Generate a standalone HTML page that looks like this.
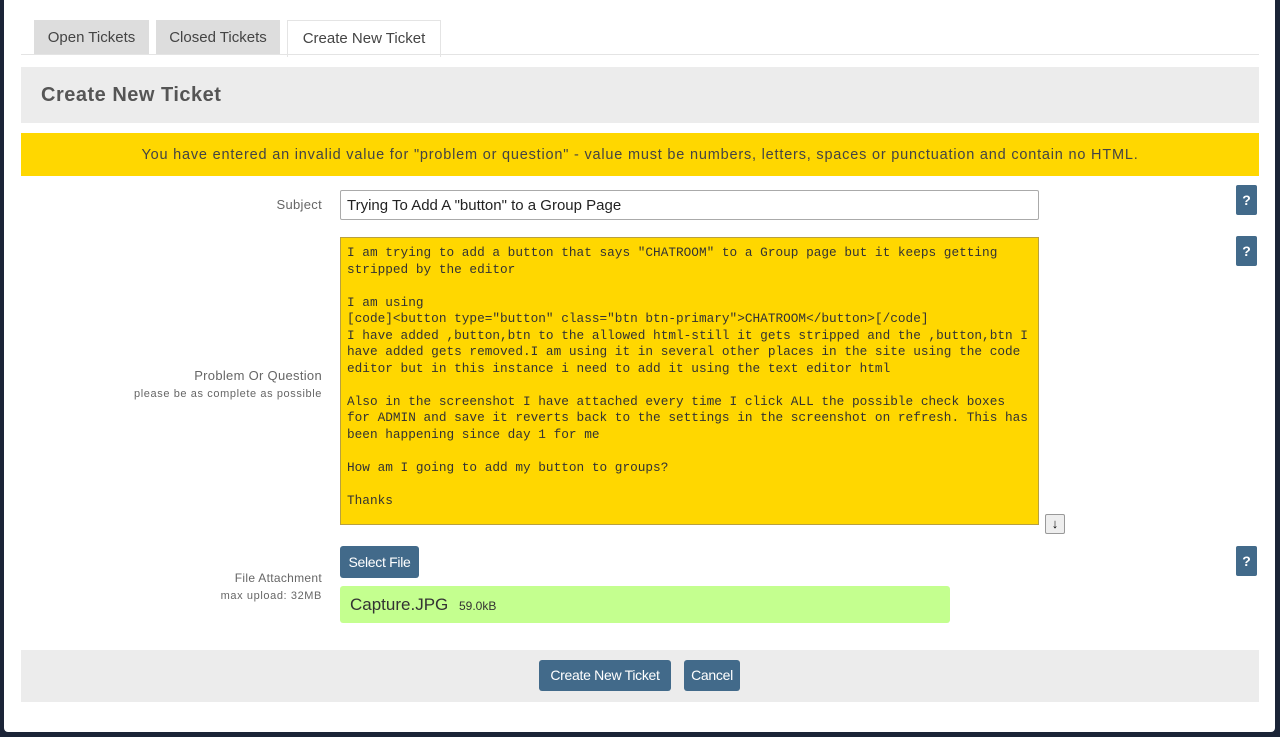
<!DOCTYPE html>
<html><head><style>
body{margin:0;width:1280px;height:737px;background:#1b2437;font-family:"Liberation Sans",sans-serif;position:relative;overflow:hidden}
.page{position:absolute;left:4px;top:0;width:1271px;height:732px;background:#fff;border-radius:0 0 4px 4px}
.a{position:absolute}
.tab{position:absolute;top:20px;height:35px;background:#ddd;color:#444;font-size:15px;line-height:35px;text-align:center}
.btn{position:absolute;background:#426a8a;color:#fff;font-size:14px;text-align:center;border-radius:3px;letter-spacing:-0.3px}
.q{position:absolute;left:1236px;width:21px;height:30px;background:#426a8a;color:#fff;font-weight:bold;font-size:14px;line-height:30px;text-align:center;border-radius:2px}
.lbl{position:absolute;right:958px;text-align:right;color:#666;font-size:13px;letter-spacing:0.3px}
.sm{font-size:11px;color:#666;letter-spacing:0.6px}
</style></head><body>
<div class="page"></div>
<div class="tab" style="left:34px;width:115px">Open Tickets</div>
<div class="tab" style="left:156px;width:124px">Closed Tickets</div>
<div class="tab" style="left:287px;width:152px;height:36px;background:#fff;border:1px solid #e4e4e4;border-bottom:none">Create New Ticket</div>
<div class="a" style="left:21px;top:54px;width:1238px;height:1px;background:#e4e4e4"></div>
<div class="a" style="left:21px;top:67px;width:1238px;height:56px;background:#ececec"></div>
<div class="a" style="left:41px;top:84px;font-size:20px;font-weight:bold;color:#555;letter-spacing:0.5px">Create New Ticket</div>
<div class="a" style="left:21px;top:133px;width:1238px;height:43px;background:#ffd700;color:#444;font-size:14.5px;line-height:45px;text-align:center;letter-spacing:0.8px">You have entered an invalid value for "problem or question" - value must be numbers, letters, spaces or punctuation and contain no HTML.</div>
<div class="lbl" style="top:197px">Subject</div>
<div class="a" style="left:340px;top:190px;border:1px solid #aaa;border-radius:2px;font-size:15px;line-height:30px;padding-left:6px;box-sizing:border-box;width:699px;height:30px;color:#222">Trying To Add A "button" to a Group Page</div>
<div class="q" style="top:185px">?</div>
<div class="q" style="top:236px">?</div>
<div class="q" style="top:546px">?</div>
<div class="a" style="left:340px;top:237px;width:699px;height:288px;background:#ffd700;border:1px solid #b8a040;box-sizing:border-box"></div>
<pre class="a" style="margin:0;left:347px;top:245px;font-family:'Liberation Mono',monospace;font-size:12.75px;line-height:16.5px;color:#333">I am trying to add a button that says "CHATROOM" to a Group page but it keeps getting
stripped by the editor

I am using
[code]&lt;button type="button" class="btn btn-primary"&gt;CHATROOM&lt;/button&gt;[/code]
I have added ,button,btn to the allowed html-still it gets stripped and the ,button,btn I
have added gets removed.I am using it in several other places in the site using the code
editor but in this instance i need to add it using the text editor html

Also in the screenshot I have attached every time I click ALL the possible check boxes
for ADMIN and save it reverts back to the settings in the screenshot on refresh. This has
been happening since day 1 for me

How am I going to add my button to groups?

Thanks</pre>
<div class="a" style="left:1045px;top:514px;width:18px;height:18px;border:1px solid #999;background:#eee;font-size:13px;font-weight:bold;line-height:18px;text-align:center;border-radius:2px">&#8595;</div>
<div class="lbl" style="top:368px">Problem Or Question<br><span class="sm" style="line-height:22px">please be as complete as possible</span></div>
<div class="btn" style="left:340px;top:546px;width:79px;height:32px;line-height:32px">Select File</div>
<div class="lbl" style="top:571px;font-size:12px">File Attachment<br><span class="sm" style="line-height:22px">max upload: 32MB</span></div>
<div class="a" style="left:340px;top:586px;width:610px;height:37px;background:#c4ff8f;border-radius:3px;line-height:37px;padding-left:10px;box-sizing:border-box;color:#333;font-size:17px">Capture.JPG <span style="font-size:12px;margin-left:6px">59.0kB</span></div>
<div class="a" style="left:21px;top:650px;width:1238px;height:52px;background:#ececec"></div>
<div class="btn" style="left:539px;top:660px;width:132px;height:31px;line-height:31px">Create New Ticket</div>
<div class="btn" style="left:684px;top:660px;width:56px;height:31px;line-height:31px">Cancel</div>
</body></html>
